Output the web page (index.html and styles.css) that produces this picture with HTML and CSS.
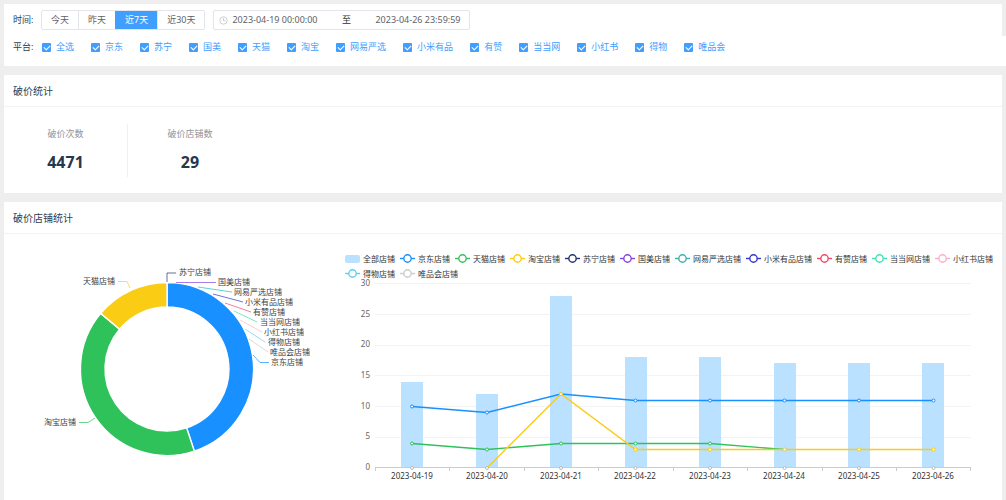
FILE: index.html
```html
<!DOCTYPE html>
<html lang="zh-CN">
<head>
<meta charset="utf-8">
<title>破价统计</title>
<link rel="stylesheet" href="styles.css">
</head>
<body>
<form class="card filters">
  <div class="filter-row">
    <span class="filter-label">时间:</span>
    <div class="segment">
      <button type="button">今天</button>
      <button type="button">昨天</button>
      <button type="button" class="active">近7天</button>
      <button type="button">近30天</button>
    </div>
    <div class="date-range">
      <svg class="clock" viewBox="0 0 9 9" aria-hidden="true"><circle cx="4.5" cy="4.5" r="3.7"/><path d="M4.5 2v2.800h2"/></svg>
      <input type="text" aria-label="开始时间" value="2023-04-19 00:00:00">
      <span class="date-sep">至</span>
      <input type="text" aria-label="结束时间" value="2023-04-26 23:59:59">
    </div>
  </div>
  <div class="filter-row platforms">
    <span class="filter-label">平台:</span>
    <div class="checks">
      <label><input type="checkbox" checked>全选</label>
      <label><input type="checkbox" checked>京东</label>
      <label><input type="checkbox" checked>苏宁</label>
      <label><input type="checkbox" checked>国美</label>
      <label><input type="checkbox" checked>天猫</label>
      <label><input type="checkbox" checked>淘宝</label>
      <label><input type="checkbox" checked>网易严选</label>
      <label><input type="checkbox" checked>小米有品</label>
      <label><input type="checkbox" checked>有赞</label>
      <label><input type="checkbox" checked>当当网</label>
      <label><input type="checkbox" checked>小红书</label>
      <label><input type="checkbox" checked>得物</label>
      <label><input type="checkbox" checked>唯品会</label>
    </div>
  </div>
</form>

<section class="card">
  <h2 class="card-title">破价统计</h2>
  <dl class="stats">
    <div class="stat"><dt>破价次数</dt><dd>4471</dd></div>
    <div class="stat"><dt>破价店铺数</dt><dd>29</dd></div>
  </dl>
</section>

<section class="card card-fill">
  <h2 class="card-title">破价店铺统计</h2>
  <div class="charts">
    <svg class="chart" viewBox="4 234 341 266" role="img" aria-label="店铺占比">
      <g class="slices">
        <path fill="#1890ff" d="M167 282.500A86.500 86.500 0 0 1 194.300 451.100L186.600 427.800A62 62 0 0 0 167 307Z"/>
        <path fill="#2fc25b" d="M194.300 451.100A86.500 86.500 0 0 1 100.700 313.400L119.500 329.100A62 62 0 0 0 186.600 427.800Z"/>
        <path fill="#facc14" d="M100.700 313.400A86.500 86.500 0 0 1 167 282.500V307A62 62 0 0 0 119.500 329.100Z"/>
      </g>
      <g class="leaders">
        <path stroke="#223273" d="M167 282V273H176"/>
        <path stroke="#8543e0" d="M176 282.500H216"/>
        <path stroke="#13c2c2" d="M198 287L232 292"/>
        <path stroke="#3436c7" d="M213 294L243 302"/>
        <path stroke="#f04864" d="M225 303L251 312"/>
        <path stroke="#36e0a5" d="M234 311L257 322"/>
        <path stroke="#ffb3c0" d="M240 320L262 332"/>
        <path stroke="#6fcdee" d="M245 329L265 342"/>
        <path stroke="#cccccc" d="M249 339L268 352"/>
        <path stroke="#1890ff" d="M253 355L260 362.500H269"/>
        <path stroke="#facc14" d="M118 281.500H127L130 288"/>
        <path stroke="#2fc25b" d="M79 422.500H88L95 418"/>
      </g>
      <g class="names">
        <text x="179" y="275">苏宁店铺</text>
        <text x="218" y="285">国美店铺</text>
        <text x="234" y="295">网易严选店铺</text>
        <text x="245" y="305">小米有品店铺</text>
        <text x="253" y="315">有赞店铺</text>
        <text x="260" y="325">当当网店铺</text>
        <text x="264" y="335">小红书店铺</text>
        <text x="268" y="345">得物店铺</text>
        <text x="270" y="355">唯品会店铺</text>
        <text x="271" y="365">京东店铺</text>
        <text class="end" x="115" y="284">天猫店铺</text>
        <text class="end" x="76" y="425">淘宝店铺</text>
      </g>
    </svg>

    <div class="trend">
      <ul class="legend">
        <li><i class="key-bar"></i>全部店铺</li>
        <li class="c-jd"><svg viewBox="0 0 15 9"><path d="M0 4.500H15"/><circle cx="7.500" cy="4.500" r="3.700"/></svg>京东店铺</li>
        <li class="c-tm"><svg viewBox="0 0 15 9"><path d="M0 4.500H15"/><circle cx="7.500" cy="4.500" r="3.700"/></svg>天猫店铺</li>
        <li class="c-tb"><svg viewBox="0 0 15 9"><path d="M0 4.500H15"/><circle cx="7.500" cy="4.500" r="3.700"/></svg>淘宝店铺</li>
        <li class="c-sn"><svg viewBox="0 0 15 9"><path d="M0 4.500H15"/><circle cx="7.500" cy="4.500" r="3.700"/></svg>苏宁店铺</li>
        <li class="c-gm"><svg viewBox="0 0 15 9"><path d="M0 4.500H15"/><circle cx="7.500" cy="4.500" r="3.700"/></svg>国美店铺</li>
        <li class="c-yx"><svg viewBox="0 0 15 9"><path d="M0 4.500H15"/><circle cx="7.500" cy="4.500" r="3.700"/></svg>网易严选店铺</li>
        <li class="c-xm"><svg viewBox="0 0 15 9"><path d="M0 4.500H15"/><circle cx="7.500" cy="4.500" r="3.700"/></svg>小米有品店铺</li>
        <li class="c-yz"><svg viewBox="0 0 15 9"><path d="M0 4.500H15"/><circle cx="7.500" cy="4.500" r="3.700"/></svg>有赞店铺</li>
        <li class="c-dd"><svg viewBox="0 0 15 9"><path d="M0 4.500H15"/><circle cx="7.500" cy="4.500" r="3.700"/></svg>当当网店铺</li>
        <li class="c-xhs"><svg viewBox="0 0 15 9"><path d="M0 4.500H15"/><circle cx="7.500" cy="4.500" r="3.700"/></svg>小红书店铺</li>
        <li class="c-dw"><svg viewBox="0 0 15 9"><path d="M0 4.500H15"/><circle cx="7.500" cy="4.500" r="3.700"/></svg>得物店铺</li>
        <li class="c-wph"><svg viewBox="0 0 15 9"><path d="M0 4.500H15"/><circle cx="7.500" cy="4.500" r="3.700"/></svg>唯品会店铺</li>
      </ul>
      <svg class="chart" viewBox="345 282 657 218" role="img" aria-label="每日破价趋势">
        <path class="grid" d="M375 283.500H971M375 314.500H971M375 345.500H971M375 375.500H971M375 406.500H971M375 437.500H971"/>
        <g class="bars">
          <rect x="401" y="382" width="22" height="86"/>
          <rect x="476" y="394" width="22" height="74"/>
          <rect x="550" y="296" width="22" height="172"/>
          <rect x="625" y="357" width="22" height="111"/>
          <rect x="699" y="357" width="22" height="111"/>
          <rect x="774" y="363" width="22" height="105"/>
          <rect x="848" y="363" width="22" height="105"/>
          <rect x="922" y="363" width="22" height="105"/>
        </g>
        <path class="axis" d="M375 467.500H971M375.500 468v3M449.500 468v3M524.500 468v3M598.500 468v3M673.500 468v3M747.500 468v3M822.500 468v3M896.500 468v3M970.500 468v3"/>
        <g class="series c-jd">
          <path d="M412 406.500L487 412.500L561 394L635.500 400.500H933.500"/>
          <circle cx="412" cy="406.500" r="1.500"/><circle cx="487" cy="412.500" r="1.500"/><circle cx="561" cy="394" r="1.500"/><circle cx="635.500" cy="400.500" r="1.500"/><circle cx="710" cy="400.500" r="1.500"/><circle cx="784.500" cy="400.500" r="1.500"/><circle cx="859" cy="400.500" r="1.500"/><circle cx="933.500" cy="400.500" r="1.500"/>
        </g>
        <g class="series c-tm">
          <path d="M412 443.500L487 449.500L561 443.500H710L784.500 449.500"/>
          <circle cx="412" cy="443.500" r="1.500"/><circle cx="487" cy="449.500" r="1.500"/><circle cx="561" cy="443.500" r="1.500"/><circle cx="635.500" cy="443.500" r="1.500"/><circle cx="710" cy="443.500" r="1.500"/>
        </g>
        <g class="series c-tb">
          <path d="M487 468L561 394L635.500 449.500H933.500"/>
          <circle cx="561" cy="394" r="1.500"/><circle cx="635.500" cy="449.500" r="1.500"/><circle cx="710" cy="449.500" r="1.500"/><circle cx="784.500" cy="449.500" r="1.500"/><circle cx="859" cy="449.500" r="1.500"/><circle cx="933.500" cy="449.500" r="1.500"/>
        </g>
        <g class="series c-zero">
          <circle cx="412" cy="468" r="1.500"/><circle cx="487" cy="468" r="1.500"/><circle cx="561" cy="468" r="1.500"/><circle cx="635.500" cy="468" r="1.500"/><circle cx="710" cy="468" r="1.500"/><circle cx="784.500" cy="468" r="1.500"/><circle cx="859" cy="468" r="1.500"/><circle cx="933.500" cy="468" r="1.500"/>
        </g>
        <g class="y-labels">
          <text x="370" y="286">30</text>
          <text x="370" y="317">25</text>
          <text x="370" y="347">20</text>
          <text x="370" y="378">15</text>
          <text x="370" y="409">10</text>
          <text x="370" y="439">5</text>
          <text x="370" y="470">0</text>
        </g>
        <g class="x-labels">
          <text x="412" y="479">2023-04-19</text>
          <text x="487" y="479">2023-04-20</text>
          <text x="561" y="479">2023-04-21</text>
          <text x="635" y="479">2023-04-22</text>
          <text x="710" y="479">2023-04-23</text>
          <text x="784" y="479">2023-04-24</text>
          <text x="859" y="479">2023-04-25</text>
          <text x="933" y="479">2023-04-26</text>
        </g>
      </svg>
    </div>
  </div>
</section>
</body>
</html>
```
FILE: styles.css
```css
* { box-sizing: border-box; }

body {
  margin: 0;
  padding: 4px 4px 0;
  min-height: 100vh;
  display: flex;
  flex-direction: column;
  gap: 9px;
  background: #eeeeee;
  color: #303d4e;
  font: 9px/14px "Noto Sans", "Noto Sans CJK SC", sans-serif;
  overflow-x: hidden;
}

button, input { font: inherit; color: inherit; }

.card { background: #ffffff; }
.card-fill { flex: 1; }

.card-title {
  margin: 0;
  padding: 9px 9px 7px;
  border-bottom: 1px solid #f3f3f3;
  font-size: 10px;
  font-weight: 400;
  line-height: 15px;
}

/* Filters */
.filters { padding-top: 6px; }
.filter-row { display: flex; align-items: center; padding-left: 9px; }
.filter-label { width: 28px; }

.segment {
  display: flex;
  height: 20px;
  border: 1px solid #e2e5eb;
  border-radius: 2px;
}
.segment button {
  padding: 0 9px;
  border: 0;
  border-left: 1px solid #e2e5eb;
  background: none;
  color: #606266;
}
.segment button:first-child { border-left: 0; }
.segment .active { background: #409eff; border-color: #409eff; color: #ffffff; }

.date-range {
  display: flex;
  align-items: center;
  height: 20px;
  margin-left: 8px;
  padding: 0 5px;
  border: 1px solid #e2e5eb;
  border-radius: 2px;
  color: #606266;
}
.date-range input {
  width: 93px;
  padding: 0;
  border: 0;
  background: none;
  text-align: center;
}
.date-sep { width: 50px; text-align: center; color: #303133; }
.clock { width: 9px; height: 9px; fill: none; stroke: #c0c4cc; stroke-width: 0.8; }

.platforms {
  margin: 6px -4px 0 0;
  padding-top: 4px;
  padding-bottom: 12px;
  background: #ffffff;
}
.checks { display: flex; flex-wrap: wrap; gap: 0 17px; padding-left: 1px; color: #409eff; }
.checks label { display: flex; align-items: center; gap: 5px; }
.checks input {
  appearance: none;
  width: 9px;
  height: 9px;
  margin: 0;
  border-radius: 1px;
  background: #409eff;
  display: grid;
  place-items: center;
}
.checks input::before {
  content: "";
  width: 5px;
  height: 3px;
  border: solid #ffffff;
  border-width: 0 0 1px 1px;
  transform: rotate(-45deg);
}

/* Totals */
.stats { display: flex; margin: 0; padding: 17px 0 16px; }
.stat { width: 124px; height: 53px; text-align: center; }
.stat:first-child { border-right: 1px solid #f0f0f0; }
.stat dt { padding-top: 3px; color: #909399; line-height: 14px; }
.stat dd { margin: 9px 0 0; font-size: 16px; font-weight: 700; line-height: 24px; color: #263750; }

/* Charts */
.charts { display: grid; grid-template-columns: 341fr 657fr; }
.chart { display: block; width: 100%; overflow: visible; font-size: 8px; }
.trend { padding-top: 17px; }

.slices { stroke: #ffffff; stroke-width: 1.4; }
.leaders { fill: none; stroke-width: 0.7; }
.names { fill: #404040; }
.end { text-anchor: end; }

.legend {
  display: flex;
  flex-wrap: wrap;
  gap: 0 5px;
  margin: 0 0 1px;
  padding: 0;
  list-style: none;
  font-size: 8px;
  line-height: 15px;
  color: #333333;
}
.legend li { display: flex; align-items: center; gap: 3px; }
.legend svg { width: 15px; height: 9px; fill: #ffffff; stroke: var(--series); stroke-width: 1.4; }
.key-bar { width: 15px; height: 8px; border-radius: 2px; background: #bae1ff; }

.c-jd { --series: #1890ff; }
.c-tm { --series: #2fc25b; }
.c-tb { --series: #facc14; }
.c-sn { --series: #223273; }
.c-gm { --series: #8543e0; }
.c-yx { --series: #36b3b0; }
.c-xm { --series: #3436c7; }
.c-yz { --series: #f04864; }
.c-dd { --series: #43dfb4; }
.c-xhs { --series: #ffaccb; }
.c-dw { --series: #5dd0ee; }
.c-wph { --series: #cccccc; }
.c-zero { --series: #bbbbbb; }

.grid { stroke: #f3f3f3; }
.bars { fill: #bae1ff; }
.axis { stroke: #cccccc; }
.series path { fill: none; stroke: var(--series); stroke-width: 1.4; }
.series circle { fill: #ffffff; stroke: var(--series); stroke-width: 1; }
.y-labels { fill: #666666; text-anchor: end; }
.x-labels { fill: #333333; text-anchor: middle; }
```
